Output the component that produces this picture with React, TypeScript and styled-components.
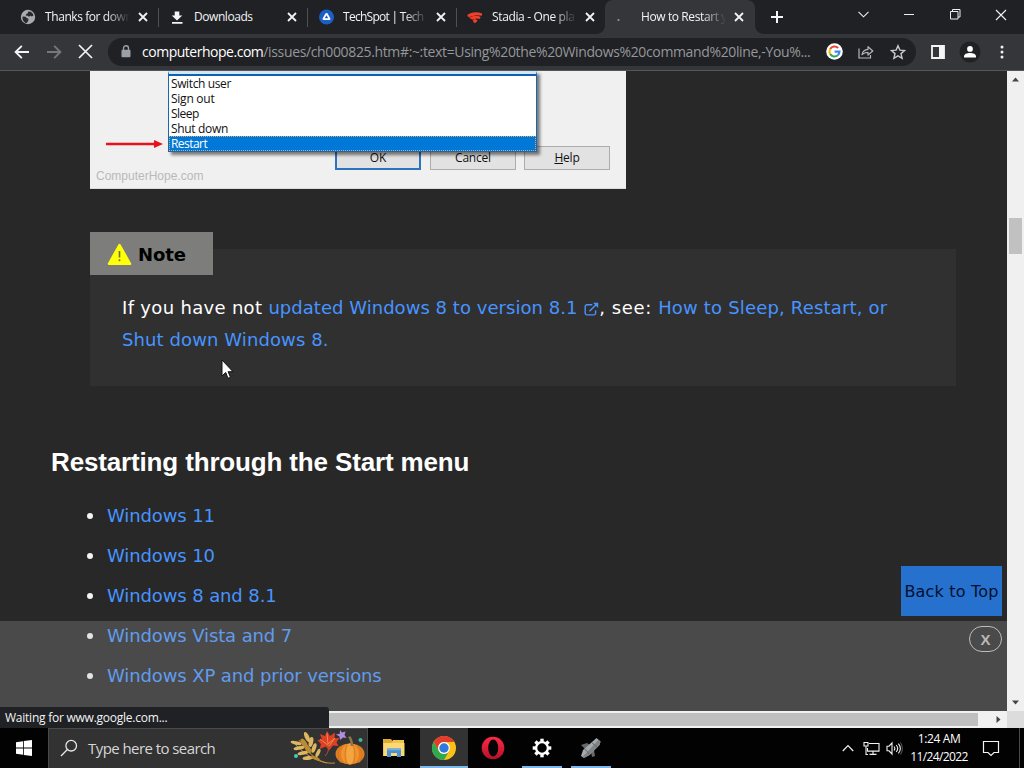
import React from "react";
import styled, { createGlobalStyle, css } from "styled-components";

const UI = `"Open Sans", "Noto Sans", sans-serif`;
const BODY = `"DejaVu Sans", sans-serif`;

const Global = createGlobalStyle`
  * { box-sizing: border-box; }
  body { margin: 0; background: #000; overflow: hidden; }
`;

const Screen = styled.div`
  position: relative;
  display: flex;
  flex-direction: column;
  width: 1024px;
  height: 768px;
  overflow: hidden;
  font-family: ${UI};
`;

/* ---------- tab strip ---------- */

const TabStrip = styled.div`
  display: flex;
  height: 34px;
  padding-left: 9px;
  background: #202124;
`;

const TabBox = styled.div<{ $active?: boolean; $last?: boolean }>`
  position: relative;
  display: flex;
  align-items: center;
  width: ${(p) => (p.$active ? 150 : 149)}px;
  height: 34px;
  padding: 0 9px 0 11px;
  ${(p) =>
    p.$active
      ? css`
          background: #35363a;
          border-radius: 8px 8px 0 0;
          &::before,
          &::after {
            content: "";
            position: absolute;
            bottom: 0;
            width: 8px;
            height: 8px;
          }
          &::before {
            left: -8px;
            background: radial-gradient(circle at 0 0, transparent 7.5px, #35363a 8px);
          }
          &::after {
            right: -8px;
            background: radial-gradient(circle at 100% 0, transparent 7.5px, #35363a 8px);
          }
        `
      : !p.$last &&
        css`
          &::after {
            content: "";
            position: absolute;
            right: -1px;
            top: 8px;
            width: 1px;
            height: 19px;
            background: #4e5054;
          }
        `}
`;

const Favicon = styled.span`
  display: flex;
  flex: none;
  width: 16px;
  height: 16px;
  margin-right: 8px;
`;

const TabTitle = styled.span<{ $spacing: number; $fade?: boolean }>`
  flex: none;
  width: 87px;
  padding-left: 1px;
  overflow: hidden;
  white-space: nowrap;
  font-size: 12px;
  line-height: 34px;
  letter-spacing: ${(p) => p.$spacing}px;
  color: #f1f3f4;
  ${(p) =>
    p.$fade &&
    css`
      mask-image: linear-gradient(to right, #000 62px, transparent 86px);
    `}
`;

const TabClose = styled.span`
  display: flex;
  margin-left: 7px;
`;

const NewTab = styled.div`
  display: flex;
  align-items: center;
  width: 44px;
  padding-left: 16px;
`;

const WindowButtons = styled.div`
  display: flex;
  margin-left: auto;
  height: 29px;
`;

const WindowButton = styled.div`
  display: flex;
  align-items: center;
  justify-content: center;
  width: 46px;
`;

/* ---------- toolbar ---------- */

const Toolbar = styled.div`
  display: flex;
  align-items: center;
  height: 37px;
  padding: 0 0 1px 14px;
  background: #35363a;
  border-bottom: 1px solid #55565a;
`;

const NavButton = styled.span`
  display: flex;
  width: 32px;
`;

const Omnibox = styled.div`
  display: flex;
  align-items: center;
  width: 808px;
  height: 28px;
  margin-left: -2px;
  padding: 0 2px 0 13px;
  border-radius: 14px;
  background: #202124;
`;

const Url = styled.div`
  display: flex;
  width: 676px;
  margin-left: 11px;
  font-size: 14px;
  line-height: 28px;
  white-space: nowrap;
  color: #9aa0a6;
`;

const UrlPart = styled.span<{ $host?: boolean }>`
  letter-spacing: ${(p) => (p.$host ? -0.48 : -0.36)}px;
  color: ${(p) => (p.$host ? "#fff" : "#94979b")};
`;

const OmniIcon = styled.span`
  display: flex;
  flex: none;
  justify-content: center;
  width: 32px;
`;

const Actions = styled.div`
  display: flex;
  align-items: center;
  padding-left: 6px;
`;

/* ---------- page ---------- */

const Viewport = styled.div`
  display: flex;
  height: 640px;
`;

const Page = styled.main`
  position: relative;
  width: 1007px;
  height: 640px;
  overflow: hidden;
  background: #282828;
  font-family: ${BODY};
  font-size: 18px;
  color: #fff;
`;

const Figure = styled.div`
  position: relative;
  display: flex;
  align-items: flex-end;
  justify-content: space-between;
  width: 536px;
  height: 118px;
  margin-left: 90px;
  padding: 0 16px 18px 6px;
  background: #f0f0f0;
  border-bottom: 1px solid #dcdcdc;
`;

const Watermark = styled.span`
  margin-bottom: -14px;
  font: 12px/16px "Liberation Sans", sans-serif;
  color: #b9b9b9;
`;

const DialogButtons = styled.div`
  display: flex;
  gap: 8px;
`;

const DialogButton = styled.span<{ $default?: boolean }>`
  width: 86px;
  height: 24px;
  margin-right: ${(p) => (p.$default ? 1 : 0)}px;
  border: ${(p) => (p.$default ? "2px solid #2b74bd" : "1px solid #adadad")};
  background: #e2e2e2;
  font: 12px/${(p) => (p.$default ? 19 : 21)}px ${UI};
  letter-spacing: -0.2px;
  text-align: center;
  color: #111;
`;

const Choices = styled.ul`
  position: absolute;
  left: 78px;
  top: 0;
  width: 369px;
  margin: 0;
  padding: 0;
  list-style: none;
  background: #fff;
  border: 1px solid #1767b1;
  border-top: 3px solid #cfe6f7;
  box-shadow: 3px 3px 3px rgba(0, 0, 0, 0.5);
  &::before {
    content: "";
    display: block;
    height: 2px;
    background: #1160ab;
  }
`;

const Choice = styled.li<{ $selected?: boolean; $spacing: number }>`
  height: 15px;
  padding-left: 2px;
  font: 12px/16px ${UI};
  letter-spacing: ${(p) => p.$spacing}px;
  color: ${(p) => (p.$selected ? "#fff" : "#111")};
  ${(p) =>
    p.$selected &&
    css`
      background: #0078d7;
      outline: 1px dotted #d8a878;
      outline-offset: -1px;
    `}
`;

const RedArrow = styled.svg`
  position: absolute;
  left: 15px;
  top: 68px;
`;

const Note = styled.section`
  width: 866px;
  height: 137px;
  margin: 60px 0 0 90px;
  padding: 0 32px;
  background: #303030;
`;

const NoteTab = styled.div`
  display: flex;
  align-items: center;
  width: 123px;
  height: 43px;
  margin: 0 0 0 -32px;
  padding: 2px 0 0 17px;
  transform: translateY(-17px);
  background: #7d7d7b;
  font-weight: 700;
  letter-spacing: -0.1px;
  color: #000;
  svg {
    margin: 0 6px 0 0;
  }
`;

const NoteText = styled.p`
  margin: 0;
  line-height: 32px;
  white-space: nowrap;
  svg {
    margin: 0 0 -2px 1px;
  }
`;

const Run = styled.span<{ $spacing: number }>`
  letter-spacing: ${(p) => p.$spacing}px;
`;

const Link = styled.a<{ $spacing?: number }>`
  color: #4794ff;
  letter-spacing: ${(p) => p.$spacing ?? 0}px;
`;

const Heading = styled.h2`
  margin: 61px 0 0 51px;
  font: 700 26px/30px "Liberation Sans", sans-serif;
  letter-spacing: -0.15px;
`;

const Versions = styled.ul`
  margin: 19px 0 0 87px;
  padding: 0;
  list-style: none;
`;

const Version = styled.li`
  display: flex;
  align-items: center;
  gap: 14px;
  height: 40px;
  line-height: 40px;
  &::before {
    content: "";
    width: 6px;
    height: 6px;
    border-radius: 50%;
    background: #f4f4f4;
  }
`;

const BackToTop = styled.div`
  position: absolute;
  right: 5px;
  top: 495px;
  width: 101px;
  height: 50px;
  font-size: 16px;
  line-height: 51px;
  letter-spacing: 0.19px;
  text-align: center;
  white-space: nowrap;
  color: #04102e;
  background: #2571cd;
`;

const AdBar = styled.div`
  position: absolute;
  left: 0;
  top: 550px;
  display: flex;
  justify-content: flex-end;
  width: 1007px;
  height: 90px;
  padding: 5px 5px 0 0;
  background: rgba(180, 180, 180, 0.245);
`;

const AdClose = styled.span`
  width: 33px;
  height: 26px;
  border: 1px solid #bdbdbd;
  border-radius: 13px;
  font: 700 15px/25px "Liberation Sans", sans-serif;
  text-align: center;
  color: #b8b8b8;
`;

/* ---------- scroll bars ---------- */

const VScroll = styled.div`
  display: flex;
  flex-direction: column;
  justify-content: space-between;
  width: 17px;
  height: 640px;
  background: #f0f0f0;
`;

const ScrollArrow = styled.span`
  display: flex;
  align-items: center;
  justify-content: center;
  width: 17px;
  height: 17px;
`;

const VTrack = styled.div`
  flex: 1;
  padding: 130px 2px 0;
`;

const VThumb = styled.div`
  height: 36px;
  background: #c1c1c1;
`;

const HScroll = styled.div`
  display: flex;
  align-items: center;
  height: 17px;
  background: #f1f1f1;
`;

const HThumb = styled.div`
  width: 961px;
  height: 13px;
  margin: 0 12px 0 17px;
  background: #bfbfbf;
`;

const Corner = styled.div`
  width: 17px;
  height: 17px;
  background: #dcdcdc;
`;

const Status = styled.div`
  position: absolute;
  left: 0;
  top: 707px;
  width: 329px;
  height: 21px;
  padding-left: 5px;
  border-radius: 0 3px 0 0;
  background: #202124;
  font-size: 12px;
  line-height: 22px;
  letter-spacing: -0.24px;
  color: #f4f4f4;
`;

/* ---------- task bar ---------- */

const Taskbar = styled.footer`
  display: flex;
  height: 40px;
  background: #020202;
  color: #fff;
`;

const Start = styled.div`
  display: flex;
  align-items: center;
  justify-content: center;
  width: 48px;
`;

const Search = styled.div`
  display: flex;
  align-items: center;
  width: 320px;
  height: 40px;
  padding: 0 0 2px 11px;
  background: #323232;
  border: 1px solid #4a4a4a;
  border-bottom: 0;
`;

const SearchText = styled.span`
  flex: none;
  width: 202px;
  margin-left: 10px;
  font-size: 15px;
  letter-spacing: -0.57px;
  color: #d6d6d6;
`;

const Task = styled.div<{ $active?: boolean; $line?: boolean }>`
  position: relative;
  display: flex;
  align-items: center;
  justify-content: center;
  width: 49px;
  height: 40px;
  &::after {
    content: "";
    position: absolute;
    bottom: 0;
    left: 5px;
    right: 4px;
    height: 2px;
    background: ${(p) => (p.$line ? "#7db8ea" : "transparent")};
  }
  ${(p) =>
    p.$active &&
    css`
      width: 48px;
      background: #333;
      &::after {
        left: 0;
        right: 0;
      }
    `}
`;

const Tasks = styled.div`
  display: flex;
  padding-left: 3px;
`;

const Tray = styled.div`
  display: flex;
  align-items: center;
  margin-left: auto;
  padding-right: 4px;
`;

const NetworkSlot = styled.span`
  display: flex;
  margin: 0 6px 0 9px;
`;

const Clock = styled.div`
  display: flex;
  flex-direction: column;
  align-items: center;
  width: 60px;
  margin: 0 13px 0 6px;
  font-size: 12px;
  line-height: 18px;
  white-space: nowrap;
`;

const ClockLine = styled.span<{ $spacing: number }>`
  letter-spacing: ${(p) => p.$spacing}px;
`;

const ShowDesktop = styled.span`
  width: 1px;
  height: 40px;
  margin-left: 19px;
  background: #4a4a4a;
`;

const Pointer = styled.svg`
  position: absolute;
  left: 221px;
  top: 359px;
`;

/* ---------- icons ---------- */

const Cross = ({ size, color = "#f1f3f4", w = 1.6 }: { size: number; color?: string; w?: number }) => (
  <svg width={size} height={size} viewBox={`0 0 ${size} ${size}`}>
    <path d={`M1 1L${size - 1} ${size - 1}M${size - 1} 1L1 ${size - 1}`} stroke={color} strokeWidth={w} />
  </svg>
);

const Globe = () => (
  <svg width="16" height="16" viewBox="0 0 16 16">
    <circle cx="8" cy="8" r="7.2" fill="#a9abae" />
    <path d="M2.6 7.4l3 .3 1.3 1.5 1.6.6-.2 2-1.5 2.3C4 13.600 2 11 2.600 7.400zM8.200 2.400l2.500.4 2 1.800.8 1.900-1.700.9-1.300-.6-1.600.9-1.200-.9-1.900-.4.3-1.500 1.600-.5z" fill="#292a2d" />
  </svg>
);

const DownloadIcon = () => (
  <svg width="16" height="16" viewBox="0 0 16 16">
    <path d="M5.700 2.500h4.600v4h3L8 11.500 2.700 6.500h3zM3 13h10.500v1.700H3z" fill="#f5f5f5" />
  </svg>
);

const TechSpotIcon = () => (
  <svg width="16" height="16" viewBox="0 0 16 16">
    <circle cx="8.500" cy="8" r="7.500" fill="#1a5fc4" />
    <path d="M8.500 5.200l2.700 4.600H5.800z" fill="none" stroke="#fff" strokeWidth="2.500" strokeLinejoin="round" />
    <path d="M8.500 6.300l1.700 3H6.800z" fill="#1a5fc4" />
  </svg>
);

const StadiaIcon = () => (
  <svg width="17" height="16" viewBox="0 0 17 16">
    <path d="M.3 5.900C4.500 2.600 10.500 2 16 4.200c.3 1-.1 1.900-.7 2.500C11.500 5.500 8.200 6 6 7.300c3-.9 6.200-.7 8.500.7-.2 1-.7 1.700-1.400 2.100-2.200-.9-4-.7-5.300.3 1.400 0 2.700.4 3.400 1.200-.7 1.400-2 2.400-3.700 2.900L5.800 10.600C4 10.300 3 9.500 2.500 8.300 1.300 7.900.6 7 .3 5.900z" fill="#f0402c" />
    <path d="M6 7.300C4.600 7.800 3.500 8.200 2.500 8.300M7.800 10.400l-2 .2" stroke="#a81c14" strokeWidth="1" />
  </svg>
);

const Arrow = ({ flip, color }: { flip?: boolean; color: string }) => (
  <svg width="16" height="16" viewBox="0 0 16 16">
    <path
      d={flip ? "M1 8h13M8.200 1.800L14.400 8l-6.200 6.200" : "M15 8H2M7.800 1.800L1.600 8l6.200 6.200"}
      fill="none"
      stroke={color}
      strokeWidth="1.900"
    />
  </svg>
);

const Lock = () => (
  <svg width="10" height="13" viewBox="0 0 10 13">
    <rect x="0.500" y="4.800" width="9" height="7.400" rx="1" fill="#9aa0a6" />
    <path d="M2.500 5V3.300a2.500 2.500 0 015 0V5" fill="none" stroke="#9aa0a6" strokeWidth="1.400" />
  </svg>
);

const GoogleIcon = () => (
  <svg width="17" height="17" viewBox="0 0 17 17">
    <circle cx="8.500" cy="8.500" r="8.300" fill="#fff" />
    <g fill="none" strokeWidth="2.100">
      <path d="M12.100 5A5 5 0 004.200 6" stroke="#ea4335" />
      <path d="M4.200 6a5 5 0 000 5" stroke="#fbbc05" />
      <path d="M4.200 11a5 5 0 007.600 1.300" stroke="#34a853" />
      <path d="M11.800 12.300a5 5 0 001.700-3.700H8.600" stroke="#4285f4" />
    </g>
  </svg>
);

const ShareIcon = () => (
  <svg width="16" height="16" viewBox="0 0 16 16" fill="none" stroke="#b4b7ba" strokeWidth="1.200">
    <path d="M1 4.500v9.500h11.500V11" />
    <path d="M4 10.700c.5-3.200 2.400-5 6-5.300V2.700L14.800 7 10 11V8.400c-2.600 0-4.500.6-6 2.300z" strokeLinejoin="round" />
  </svg>
);

const StarIcon = () => (
  <svg width="16" height="16" viewBox="0 0 16 16">
    <path d="M8 1.700l1.900 4.400 4.700.4-3.600 3.100 1.100 4.700L8 11.800l-4.100 2.500L5 9.600 1.400 6.500l4.700-.4z" fill="none" stroke="#c6c9cc" strokeWidth="1.400" />
  </svg>
);

const PanelIcon = () => (
  <svg width="14" height="14" viewBox="0 0 14 14">
    <path d="M1 1h12v12H1z" fill="none" stroke="#f5f5f5" strokeWidth="1.800" />
    <path d="M8 1h5v12H8z" fill="#f5f5f5" />
  </svg>
);

const Profile = () => (
  <svg width="22" height="22" viewBox="0 0 22 22">
    <circle cx="11" cy="11" r="10.500" fill="#202124" />
    <circle cx="11" cy="7.900" r="2.900" fill="#fff" />
    <path d="M5 16.500v-1.200c0-2.300 3-3.400 6-3.400s6 1.100 6 3.400v1.200z" fill="#fff" />
  </svg>
);

const Dots = () => (
  <svg width="4" height="14" viewBox="0 0 4 14" fill="#f1f1f1">
    <circle cx="2" cy="2" r="1.500" />
    <circle cx="2" cy="7" r="1.500" />
    <circle cx="2" cy="12" r="1.500" />
  </svg>
);

const Triangle = ({ points }: { points: string }) => (
  <svg width="9" height="9" viewBox="0 0 9 9">
    <polygon points={points} fill="#454545" />
  </svg>
);

const Warning = () => (
  <svg width="25" height="23" viewBox="0 0 25 23">
    <path d="M12.500 2l10.500 18.800H2z" fill="#ffff0a" stroke="#ffff0a" strokeWidth="2.500" strokeLinejoin="round" />
    <path d="M12.500 8v6.500" stroke="#6d6d30" strokeWidth="1.600" />
    <circle cx="12.500" cy="17.300" r="1" fill="#6d6d30" />
  </svg>
);

const External = () => (
  <svg width="15" height="14" viewBox="0 0 15 14" fill="none" stroke="#4794ff" strokeWidth="1.400">
    <path d="M8.300 2.700H3A1.800 1.800 0 001.200 4.500v6.600A1.800 1.800 0 003 12.900h6.800a1.800 1.800 0 001.800-1.800V8.300" />
    <path d="M5.500 9.300l7-7" />
    <path d="M9 .8h5.200V6z" fill="#4794ff" stroke="none" />
  </svg>
);

const WindowsLogo = () => (
  <svg width="16" height="16" viewBox="0 0 16 16" fill="#fff">
    <path d="M0 2.200L7 1.200v6.300H0zM7.800 1.100L16 0v7.500H7.800zM0 8.400h7v6.400l-7-1zM7.800 8.400H16V16l-8.200-1.100z" />
  </svg>
);

const Magnifier = () => (
  <svg width="18" height="18" viewBox="0 0 18 18" fill="none" stroke="#e6e6e6" strokeWidth="1.300">
    <circle cx="11.200" cy="6.700" r="5.300" />
    <path d="M7.400 10.500L1 17" />
  </svg>
);

const Harvest = () => (
  <svg width="77" height="36" viewBox="0 0 77 36">
    <path d="M37 33C27 31 18 23 9 10" fill="none" stroke="#a77a2e" strokeWidth="1.200" />
    <path d="M45 33C35 34 20 30 5 14" fill="none" stroke="#c1913c" strokeWidth="1" />
    <g fill="#dcb660">
      <ellipse cx="17" cy="7" rx="2.200" ry="5.500" transform="rotate(-25 17 7)" />
      <ellipse cx="21" cy="12" rx="2.200" ry="5" transform="rotate(12 21 12)" />
      <ellipse cx="24" cy="18" rx="2" ry="5" transform="rotate(20 24 18)" />
      <ellipse cx="28" cy="23" rx="1.800" ry="4.500" transform="rotate(25 28 23)" />
      <ellipse cx="6" cy="13" rx="5.500" ry="1.700" transform="rotate(12 6 13)" />
      <ellipse cx="9" cy="18" rx="5.500" ry="1.900" transform="rotate(-10 9 18)" />
      <ellipse cx="13" cy="23" rx="5.500" ry="1.900" transform="rotate(-12 13 23)" />
      <ellipse cx="18" cy="28" rx="5.500" ry="1.900" transform="rotate(-8 18 28)" />
    </g>
    <g fill="#b98b35">
      <ellipse cx="14" cy="13" rx="2.400" ry="5" transform="rotate(-35 14 13)" />
      <ellipse cx="18" cy="19" rx="2.400" ry="5" transform="rotate(-35 18 19)" />
      <ellipse cx="25" cy="28" rx="5" ry="1.500" transform="rotate(20 25 28)" />
    </g>
    <path d="M37 1l3 5 5-3.500-.5 6 5-.8-3 4.600 2 3.700-5.500-.5-4 5-3-4-6.500 2.500 1.500-4.800-3.500-4.200 4.500-.5-2-5.500 5 2z" fill="#dd3f28" />
    <path d="M37 3l1 11 7-6-6 8-9-7" fill="none" stroke="#f28a3c" strokeWidth="1" />
    <path d="M38 15c1 5 0 8-3 11" fill="none" stroke="#b8552c" strokeWidth="1" />
    <path d="M50 0l2 2.500 3.500-1-1 3.500 2 3-3.500-.5L50 10l-.5-3.500-3.500-2 3.800-.8z" fill="#b48be0" />
    <circle cx="70.500" cy="10" r="2" fill="#3fb79b" />
    <circle cx="6" cy="26" r="2" fill="#42cdb4" />
    <ellipse cx="60" cy="24" rx="14.500" ry="10.500" fill="#e27f22" />
    <ellipse cx="60" cy="24" rx="9" ry="10.500" fill="#ee9430" />
    <ellipse cx="60" cy="24" rx="3.600" ry="10.500" fill="#f5a540" />
    <path d="M52 16c-5 4-5 13-1 17M68 16c5 4 5 13 1 17M57 15c-2.500 5-2.500 14 0 19M63 15c2.500 5 2.500 14 0 19" fill="none" stroke="#c96c1e" strokeWidth=".6" />
    <path d="M60.500 16c0-4-.5-6-2.500-9l2.500-.7c2 3 2.500 5.500 2.800 9.700z" fill="#8b7848" />
  </svg>
);

const Folder = () => (
  <svg width="25" height="20" viewBox="0 0 25 20">
    <path d="M0 1h8l1.500 2H21v15H0z" fill="#e3a92f" />
    <path d="M10 2h11v4H8z" fill="#f0c44a" />
    <path d="M.5 5h21v13H.5z" fill="#fbd873" />
    <path d="M4 19v-8.500h14V19h-4v-4H8v4z" fill="#4c92d2" />
    <path d="M4 10.500h14v1.800H4z" fill="#6eb0e6" />
  </svg>
);

const Chrome = () => (
  <svg width="24" height="24" viewBox="0 0 24 24">
    <circle cx="12" cy="12" r="12" fill="#fbc116" />
    <path d="M1.600 6A12 12 0 0122.400 6H12a6 6 0 00-5.200 9z" fill="#e33b2e" />
    <path d="M1.600 6A12 12 0 0012 24l5.200-9A6 6 0 016.800 15z" fill="#2da94f" />
    <circle cx="12" cy="12" r="5.900" fill="#fff" />
    <circle cx="12" cy="12" r="4.700" fill="#2f78e0" />
  </svg>
);

const Opera = () => (
  <svg width="24" height="24" viewBox="0 0 24 24">
    <defs>
      <linearGradient id="opera" x1="0" y1="0" x2="0" y2="1">
        <stop offset="0" stopColor="#ff2a45" />
        <stop offset="1" stopColor="#b5102a" />
      </linearGradient>
    </defs>
    <circle cx="12" cy="12" r="11.300" fill="url(#opera)" />
    <ellipse cx="12.200" cy="12" rx="5" ry="8.500" fill="#050505" />
  </svg>
);

const Gear = () => (
  <svg width="20" height="20" viewBox="-10 -10 20 20">
    {[0, 45, 90, 135, 180, 225, 270, 315].map((a) => (
      <rect key={a} x="-1.700" y="-9.300" width="3.400" height="4" fill="#fff" transform={`rotate(${a})`} />
    ))}
    <circle r="5.900" fill="none" stroke="#fff" strokeWidth="2.300" />
  </svg>
);

const Rocket = () => (
  <svg width="22" height="22" viewBox="0 0 22 22">
    <path d="M1 8l6-2 3 2-5 4zM14 13l1 6-3 1-1-5z" fill="#66696b" />
    <path d="M16.500 1l4 3.500-1 3.500-10 10-5.500 3-3-2 2-6 9-8z" fill="#a6a9ab" />
    <path d="M18.500 2.700l2 1.800-1 3.500-10 10-5.500 3-1.500-1z" fill="#818486" />
    <path d="M5 12l4 5M11.500 5.500l5.500 4.500" stroke="#66696b" strokeWidth="1" />
  </svg>
);

const NetworkIcon = () => (
  <svg width="17" height="15" viewBox="0 0 17 15" fill="none" stroke="#f2f2f2" strokeWidth="1.100">
    <path d="M6 2.500h10v7.600H4.500V7M10 10v3.300M6.500 13.400h7" />
    <path d="M1 1.500h4V5H1zM3 5v8.500h2" />
  </svg>
);

const Volume = () => (
  <svg width="17" height="15" viewBox="0 0 17 15" fill="none" stroke="#f2f2f2" strokeWidth="1.100">
    <path d="M1 5.200h2L6 2v11L3 9.800H1z" />
    <path d="M8 5.500c1 1.200 1 2.800 0 4M10.200 4c1.700 2 1.700 5 0 7M12.400 2.600c2.400 3 2.400 6.800 0 9.800" />
    <path d="M14.500 1.500c2.500 3.500 2.500 8.500 0 12" stroke="#555" />
  </svg>
);

const Notification = () => (
  <svg width="18" height="17" viewBox="0 0 18 17">
    <path d="M1.500 1.500h15v11H12l-3 3-3-3H1.500z" fill="none" stroke="#f5f5f5" strokeWidth="1.200" />
  </svg>
);

/* ---------- composition ---------- */

const tabs = [
  { title: "Thanks for down", icon: <Globe />, spacing: -0.42, fade: true },
  { title: "Downloads", icon: <DownloadIcon />, spacing: -0.445 },
  { title: "TechSpot | Tech", icon: <TechSpotIcon />, spacing: -0.72, fade: true },
  { title: "Stadia - One pla", icon: <StadiaIcon />, spacing: -0.36, fade: true },
];

const choices = [
  { label: "Switch user", spacing: -0.38 },
  { label: "Sign out", spacing: -0.25 },
  { label: "Sleep", spacing: -0.5 },
  { label: "Shut down", spacing: -0.33 },
  { label: "Restart", spacing: -0.55 },
];

const versions = ["Windows 11", "Windows 10", "Windows 8 and 8.1", "Windows Vista and 7", "Windows XP and prior versions"];

export default function App() {
  return (
    <Screen>
      <Global />
      <TabStrip>
        {tabs.map((t, i) => (
          <TabBox key={t.title} $last={i === tabs.length - 1}>
            <Favicon>{t.icon}</Favicon>
            <TabTitle $spacing={t.spacing} $fade={t.fade}>{t.title}</TabTitle>
            <TabClose><Cross size={10} w={1.8} /></TabClose>
          </TabBox>
        ))}
        <TabBox $active>
          <Favicon>
            <svg width="16" height="16"><circle cx="2.500" cy="11" r="1.100" fill="#9a9a9a" /></svg>
          </Favicon>
          <TabTitle $spacing={-0.391} $fade>How to Restart y</TabTitle>
          <TabClose><Cross size={10} w={1.8} /></TabClose>
        </TabBox>
        <NewTab>
          <svg width="12" height="12"><path d="M6 0v12M0 6h12" stroke="#f5f5f5" strokeWidth="2" /></svg>
        </NewTab>
        <WindowButtons>
          <WindowButton>
            <svg width="11" height="7"><path d="M.5.800l5 5 5-5" fill="none" stroke="#eee" strokeWidth="1.100" /></svg>
          </WindowButton>
          <WindowButton>
            <svg width="10" height="1"><path d="M0 .5h10" stroke="#eee" /></svg>
          </WindowButton>
          <WindowButton>
            <svg width="11" height="11" fill="none" stroke="#eee"><path d="M.5 2.500h7.500v7.500H.5zM2.500 2.500v-2h7.500V8H8" /></svg>
          </WindowButton>
          <WindowButton><Cross size={12} w={1.1} /></WindowButton>
        </WindowButtons>
      </TabStrip>

      <Toolbar>
        <NavButton><Arrow color="#f1f3f4" /></NavButton>
        <NavButton><Arrow flip color="#77787b" /></NavButton>
        <NavButton><Cross size={15} w={1.7} /></NavButton>
        <Omnibox>
          <Lock />
          <Url>
            <UrlPart $host>computerhope.com</UrlPart>
            <UrlPart>/issues/ch000825.htm#:~:text=Using%20the%20Windows%20command%20line,-You%...</UrlPart>
          </Url>
          <OmniIcon><GoogleIcon /></OmniIcon>
          <OmniIcon><ShareIcon /></OmniIcon>
          <OmniIcon><StarIcon /></OmniIcon>
        </Omnibox>
        <Actions>
          <OmniIcon><PanelIcon /></OmniIcon>
          <OmniIcon><Profile /></OmniIcon>
          <OmniIcon><Dots /></OmniIcon>
        </Actions>
      </Toolbar>

      <Viewport>
        <Page>
          <Figure>
            <Watermark>ComputerHope.com</Watermark>
            <DialogButtons>
              <DialogButton $default>OK</DialogButton>
              <DialogButton>Cancel</DialogButton>
              <DialogButton><u>H</u>elp</DialogButton>
            </DialogButtons>
            <Choices>
              {choices.map((c) => (
                <Choice key={c.label} $spacing={c.spacing} $selected={c.label === "Restart"}>{c.label}</Choice>
              ))}
            </Choices>
            <RedArrow width="60" height="10">
              <path d="M1 5h49" stroke="#e8131a" strokeWidth="2.500" />
              <path d="M49 1l9 4-9 4z" fill="#e8131a" />
            </RedArrow>
          </Figure>

          <Note>
            <NoteTab><Warning />Note</NoteTab>
            <NoteText>
              <Run $spacing={0.32}>If you have not </Run>
              <Link $spacing={0.036}>updated Windows 8 to version 8.1 <External /></Link>
              <Run $spacing={0.6}>, see: </Run>
              <Link $spacing={0.176}>How to Sleep, Restart, or</Link>
              <br />
              <Link $spacing={0.1}>Shut down Windows 8.</Link>
            </NoteText>
          </Note>

          <Heading>Restarting through the Start menu</Heading>
          <Versions>
            {versions.map((v) => (
              <Version key={v}><Link $spacing={-0.11}>{v}</Link></Version>
            ))}
          </Versions>

          <BackToTop>Back to Top</BackToTop>
          <AdBar><AdClose>X</AdClose></AdBar>
        </Page>
        <VScroll>
          <ScrollArrow><Triangle points="1,6.500 8,6.500 4.500,2.500" /></ScrollArrow>
          <VTrack><VThumb /></VTrack>
          <ScrollArrow><Triangle points="1,2.500 8,2.500 4.500,6.500" /></ScrollArrow>
        </VScroll>
      </Viewport>

      <HScroll>
        <HThumb />
        <ScrollArrow><Triangle points="2.500,1 2.500,8 6.500,4.500" /></ScrollArrow>
        <Corner />
      </HScroll>

      <Taskbar>
        <Start><WindowsLogo /></Start>
        <Search>
          <Magnifier />
          <SearchText>Type here to search</SearchText>
          <Harvest />
        </Search>
        <Tasks>
          <Task><Folder /></Task>
          <Task $active $line><Chrome /></Task>
          <Task><Opera /></Task>
          <Task $line><Gear /></Task>
          <Task $line><Rocket /></Task>
        </Tasks>
        <Tray>
          <svg width="12" height="8"><path d="M.8 7L6 1.500 11.200 7" fill="none" stroke="#f2f2f2" strokeWidth="1.200" /></svg>
          <NetworkSlot><NetworkIcon /></NetworkSlot>
          <Volume />
          <Clock>
            <ClockLine $spacing={-0.372}>1:24 AM</ClockLine>
            <ClockLine $spacing={-0.632}>11/24/2022</ClockLine>
          </Clock>
          <Notification />
          <ShowDesktop />
        </Tray>
      </Taskbar>

      <Status>Waiting for www.google.com...</Status>
      <Pointer width="13" height="21" viewBox="0 0 13 21">
        <path d="M1 1v16l3.700-3.500L7 19.300l2.500-1-2.400-5.600H12z" fill="#fff" stroke="#111" strokeWidth="1" />
      </Pointer>
    </Screen>
  );
}
